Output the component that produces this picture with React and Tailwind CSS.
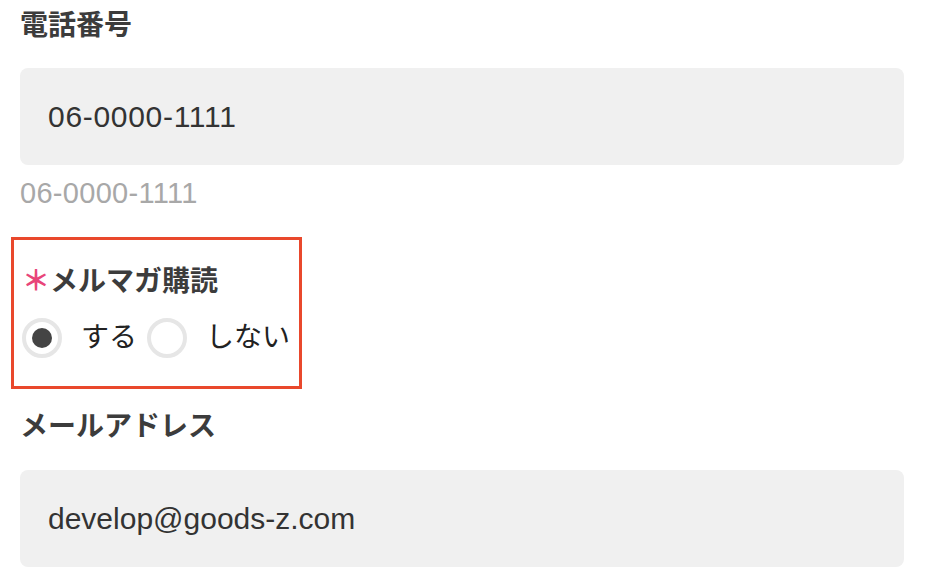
const font = { fontFamily: '"Liberation Sans", "Noto Sans CJK JP", sans-serif' };

function Label({ children, required }) {
  return (
    <div className="flex items-center h-[40px] text-[28px] font-bold text-[#3c3c3c] leading-[40px]">
      {required && (
        <span className="w-[28px] text-[#e8457a] text-[28px] font-bold overflow-hidden">＊</span>
      )}
      <span>{children}</span>
    </div>
  );
}

function Input({ value, tracking }) {
  return (
    <div
      className={`h-[97px] w-full rounded-[8px] bg-[#f0f0f0] flex items-center px-[28px] text-[30px] text-[#333] ${
        tracking ? "tracking-[0.7px]" : ""
      }`}
    >
      {value}
    </div>
  );
}

function Radio({ checked, label }) {
  return (
    <label className="flex items-center h-[40px]">
      <span className="w-[40px] h-[40px] rounded-full border-[4px] border-[#e6e6e6] bg-white flex items-center justify-center">
        {checked && <span className="w-[20px] h-[20px] rounded-full bg-[#444]" />}
      </span>
      <span className="ml-[19px] text-[28px] text-[#222] leading-[40px]">{label}</span>
    </label>
  );
}

export default function App() {
  return (
    <div className="w-[930px] h-[584px] bg-white overflow-hidden pl-[20px] pr-[26px] pt-[6px]" style={font}>
      <Label>電話番号</Label>
      <div className="mt-[22px]">
        <Input value="06-0000-1111" tracking />
      </div>
      <div className="mt-[8px] h-[40px] leading-[40px] text-[29px] tracking-[0.3px] text-[#a8a8a8]">06-0000-1111</div>

      <div className="mt-[24px] -ml-[9px] w-[291px] h-[152px] border-[3px] border-[#e9482c] pl-[8px] pt-[22px]">
        <Label required>メルマガ購読</Label>
        <div className="mt-[16px] flex items-center gap-[10px]">
          <Radio checked label="する" />
          <Radio label="しない" />
        </div>
      </div>

      <div className="mt-[18px]">
        <Label>メールアドレス</Label>
      </div>
      <div className="mt-[23px]">
        <Input value="develop@goods-z.com" />
      </div>
    </div>
  );
}
